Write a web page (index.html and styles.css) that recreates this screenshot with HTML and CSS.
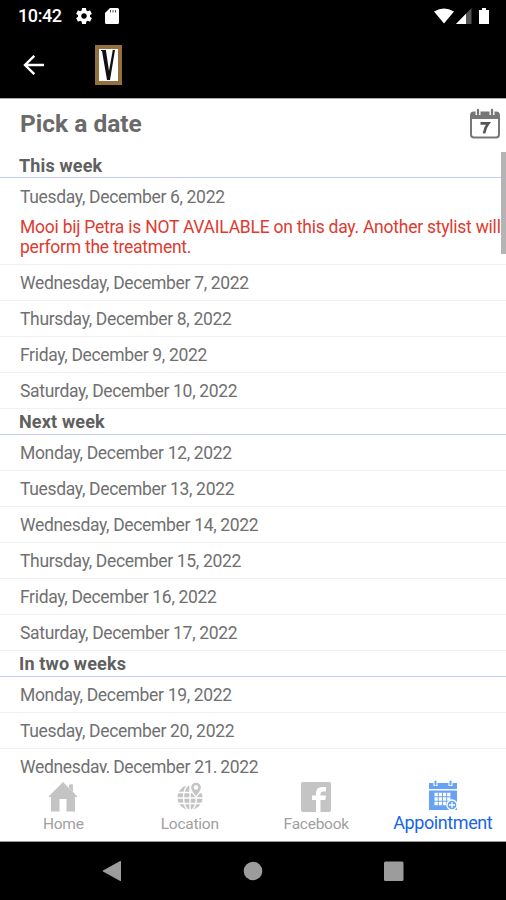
FILE: index.html
```html
<!DOCTYPE html>
<html lang="en">
<head>
<meta charset="utf-8">
<title>Pick a date</title>
<link rel="stylesheet" href="styles.css">
</head>
<body>
<div class="status">
  <span class="clock">10:42</span>
  <svg class="gear" width="16" height="16" viewBox="2 2 20 20"><path fill="#fff" d="M19.43 12.98c.04-.32.07-.64.07-.98s-.03-.66-.07-.98l2.11-1.65c.19-.15.24-.42.12-.64l-2-3.46c-.12-.22-.39-.3-.61-.22l-2.49 1c-.52-.4-1.08-.73-1.69-.98l-.38-2.65C14.46 2.18 14.25 2 14 2h-4c-.25 0-.46.18-.49.42l-.38 2.65c-.61.25-1.17.59-1.69.98l-2.49-1c-.23-.09-.49 0-.61.22l-2 3.46c-.13.22-.07.49.12.64l2.11 1.65c-.04.32-.07.65-.07.98s.03.66.07.98l-2.11 1.65c-.19.15-.24.42-.12.64l2 3.46c.12.22.39.3.61.22l2.49-1c.52.4 1.08.73 1.69.98l.38 2.65c.03.24.24.42.49.42h4c.25 0 .46-.18.49-.42l.38-2.65c.61-.25 1.17-.59 1.69-.98l2.49 1c.23.09.49 0 .61-.22l2-3.46c.12-.22.07-.49-.12-.64l-2.11-1.65zM12 15.5c-1.93 0-3.5-1.57-3.5-3.5s1.570-3.500 3.500-3.500 3.500 1.570 3.500 3.500-1.570 3.500-3.500 3.500z"/></svg>
  <svg class="card" width="14" height="16" viewBox="0 0 14 16"><path fill="#fff" d="M5 0h7.500Q14 0 14 1.500v13Q14 16 12.500 16h-11Q0 16 0 14.500V5z"/><path stroke="#555" stroke-width="1" d="M5.500 2v2.500M8 2v2.500M10.500 2v2.500"/></svg>
  <svg class="signals" width="57" height="17" viewBox="0 0 57 17"><path fill="#fff" d="M0 3.500Q10 -2.500 20 3.500L10 15.500z"/><path fill="#555" d="M22 16L37.500 0v16z"/><path fill="#fff" d="M22 16L32 5.700V16z"/><path fill="#fff" d="M45 2h3V0h4v2h3v14H45z"/></svg>
</div>
<header class="appbar">
  <svg class="back" width="22" height="20" viewBox="0 0 22 20"><path fill="none" stroke="#fff" stroke-width="2.400" d="M21 10H2M11.300 .8L2 10l9.300 9.200"/></svg>
  <svg class="logo" width="27" height="40" viewBox="0 0 27 40"><path fill="#94703f" d="M0 0h27v40H0z"/><path fill="#fff" d="M4 4h19v32H4z"/><path fill="#111" d="M6 5h5v1l3 20 3.600-20V5h2.400L15 35h-3L7 6H6z"/></svg>
</header>
<section class="title">
  <h1>Pick a date</h1>
  <svg width="30" height="31" viewBox="0 0 30 31"><rect x="1" y="4.500" width="28" height="25" rx="3" fill="#fff" stroke="#777" stroke-width="2"/><path fill="#777" d="M1 11V6q0-2 2-2h24q2 0 2 2v5z"/><path stroke="#fff" stroke-width="5" d="M8 1v6M22 1v6"/><path stroke="#777" stroke-width="2.300" stroke-linecap="round" d="M8 2v4M22 2v4"/><path fill="none" stroke="#555" stroke-width="2.700" d="M10.500 15.400h7.800q-3.300 4-4.300 10"/></svg>
</section>
<main class="list">
  <h2>This week</h2>
  <div class="row first"><p>Tuesday, December 6, 2022</p><p class="note">Mooi bij Petra is NOT AVAILABLE on this day. Another stylist will<br>perform the treatment.</p></div>
  <div class="row">Wednesday, December 7, 2022</div>
  <div class="row">Thursday, December 8, 2022</div>
  <div class="row">Friday, December 9, 2022</div>
  <div class="row">Saturday, December 10, 2022</div>
  <h2>Next week</h2>
  <div class="row">Monday, December 12, 2022</div>
  <div class="row">Tuesday, December 13, 2022</div>
  <div class="row">Wednesday, December 14, 2022</div>
  <div class="row">Thursday, December 15, 2022</div>
  <div class="row">Friday, December 16, 2022</div>
  <div class="row">Saturday, December 17, 2022</div>
  <h2>In two weeks</h2>
  <div class="row">Monday, December 19, 2022</div>
  <div class="row">Tuesday, December 20, 2022</div>
  <div class="row">Wednesday, December 21, 2022</div>
  <div class="scrollbar"></div>
</main>
<nav class="tabs">
  <a class="tab"><svg width="30" height="32" viewBox="0 0 30 32"><path fill="#c4c4c4" d="M15 1L29 15v1h-2v14.500h-8.500V18h-7v12.500H3V16H1v-1z"/><path fill="#c4c4c4" d="M21 4l3-1 1 1v7l-4-4z"/></svg><span>Home</span></a>
  <a class="tab"><svg width="30" height="32" viewBox="0 0 30 32"><circle cx="15" cy="16.500" r="12.500" fill="#c4c4c4"/><g fill="none" stroke="#fff" stroke-width="1.400"><path d="M2 11.500h26M2 17h26M2 22.500h26M15 4v26"/><ellipse cx="15" cy="16.500" rx="6.500" ry="13"/></g><path fill="#c4c4c4" stroke="#fff" stroke-width="1.300" d="M21 16q-5.500-6-5.500-9.500a5.500 5.500 0 0 1 11 0Q26.500 10 21 16z"/><circle cx="21" cy="6.500" r="2.300" fill="#fff"/></svg><span>Location</span></a>
  <a class="tab"><svg width="30" height="32" viewBox="0 0 30 32"><rect y="1" width="30" height="30" rx="2" fill="#c4c4c4"/><path fill="#fff" d="M15 31V19h-4v-4.500h4V12q0-6 6-6h4v4.500h-3q-2.500 0-2.500 2.500v1.500H25L24.300 19h-4.800v12z"/></svg><span>Facebook</span></a>
  <a class="tab active"><svg width="30" height="32" viewBox="0 0 30 32"><path fill="#67a2f5" d="M1 4h28v6H1zM1 11.500h28V31H1z"/><path stroke="#fff" stroke-width="4" d="M7.500 2v5M22.500 2v5"/><path stroke="#67a2f5" stroke-width="2" stroke-linecap="round" d="M7.500 2.500v3M22.500 2.500v3"/><path fill="none" stroke="#fff" stroke-width="3.300" stroke-dasharray="3.300 .9" d="M6.500 15.500h16.500M6.500 20h16.500M6.500 24.500h16.500"/><circle cx="24" cy="26" r="5" fill="#67a2f5" stroke="#fff" stroke-width="1.300"/><path stroke="#fff" stroke-width="1.300" d="M21 26h6M24 23v6"/></svg><span>Appointment</span></a>
</nav>
<footer class="sysnav">
  <svg width="20" height="22" viewBox="0 0 20 22"><path fill="#9c9c9c" d="M19 1.500v19q0 .8-.8.400L1 11.500q-.8-.5 0-1L18.200 1q.8-.4.800.5z"/></svg>
  <svg width="20" height="22" viewBox="0 0 20 22"><circle cx="10" cy="11" r="9.300" fill="#9c9c9c"/></svg>
  <svg width="20" height="22" viewBox="0 0 20 22"><rect y="1.500" width="19.500" height="19.500" rx="1.500" fill="#9c9c9c"/></svg>
</footer>
</body>
</html>
```
FILE: styles.css
```css
* { box-sizing: border-box; margin: 0; padding: 0; }
body {
  width: 506px;
  height: 900px;
  overflow: hidden;
  display: flex;
  flex-direction: column;
  background: #fff;
  color: #707070;
  font-family: Roboto, sans-serif;
}
svg { display: block; flex: none; }
.status {
  height: 32px;
  flex: none;
  display: flex;
  align-items: center;
  padding: 0 15px 0 18px;
  background: #000;
  color: #fff;
}
.clock { width: 58px; font-size: 18px; font-weight: 500; line-height: 32px; letter-spacing: -.4px; }
.card { margin-left: 13px; }
.signals { margin-left: auto; }
.appbar {
  height: 67px;
  flex: none;
  display: flex;
  align-items: center;
  padding-left: 23px;
  background: #000;
  border-bottom: 1px solid #aaa;
}
.logo { margin-left: 50px; }
.title {
  height: 53px;
  flex: none;
  display: flex;
  align-items: center;
  justify-content: space-between;
  padding: 0 6px 4px 20px;
}
h1 { font-size: 24.5px; font-weight: 700; line-height: 30px; color: #6a6a6a; }
.list {
  height: 621px;
  flex: none;
  overflow: hidden;
  position: relative;
  font-size: 17.5px;
  letter-spacing: -.33px;
}
h2 {
  height: 26px;
  padding-left: 19px;
  border-bottom: 1px solid #c3ccff;
  font-size: 18px;
  font-weight: 700;
  line-height: 27px;
  letter-spacing: .15px;
  color: #606060;
}
.row {
  height: 36px;
  padding-left: 20px;
  border-bottom: 1px solid #f2f2f2;
  line-height: 37px;
  white-space: nowrap;
}
.first { height: 87px; line-height: 39px; }
.note { line-height: 20px; letter-spacing: -.24px; color: #e03a2f; }
.row + h2 { line-height: 26px; }
.scrollbar { position: absolute; top: 0; right: 0; width: 5px; height: 102px; background: #b4b4b4; }
.tabs {
  height: 69px;
  flex: none;
  display: flex;
  border-bottom: 1px solid #999;
}
.tab {
  flex: 1;
  display: flex;
  flex-direction: column;
  align-items: center;
  padding-top: 8px;
  font-size: 15.5px;
  line-height: 20px;
  letter-spacing: -.25px;
  color: #a0a0a0;
}
.tab span { margin-top: 1px; }
.active { padding-top: 6px; font-size: 18px; letter-spacing: -.4px; color: #1765e8; }
.active span { margin-top: 2px; }
.sysnav {
  flex: 1;
  display: flex;
  justify-content: space-between;
  padding: 18px 102px 0 102px;
  background: #000;
}
```
